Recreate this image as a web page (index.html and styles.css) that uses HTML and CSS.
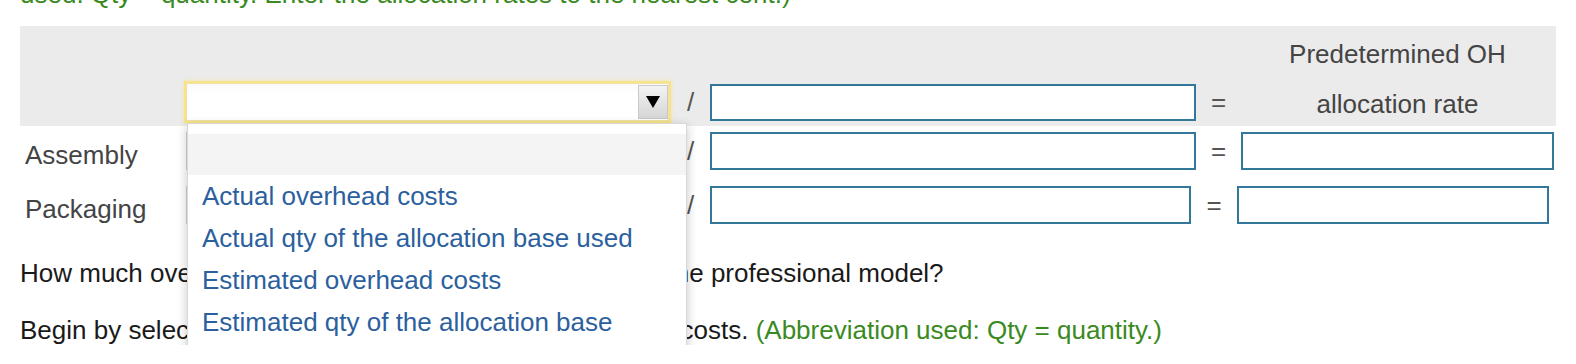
FILE: index.html
```html
<!DOCTYPE html>
<html lang="en">
<head>
<meta charset="utf-8">
<title>Overhead allocation</title>
<link rel="stylesheet" href="styles.css">
</head>
<body>
<div class="page">
  <p class="note green">used. Qty = quantity. Enter the allocation rates to the nearest cent.)</p>

  <div class="sheet">
    <div class="row hdr">
      <div class="lbl"></div>
      <div class="sel-cell">
        <div class="select focused">
          <span class="sel-val"></span>
          <span class="sel-btn"><svg width="14" height="12" viewBox="0 0 14 12"><path d="M0 0H14L7 12Z" fill="#000"/></svg></span>
          <ul class="menu">
            <li class="opt blank"></li>
            <li class="opt">Actual overhead costs</li>
            <li class="opt">Actual qty of the allocation base used</li>
            <li class="opt">Estimated overhead costs</li>
            <li class="opt">Estimated qty of the allocation base</li>
          </ul>
        </div>
      </div>
      <div class="op">/</div>
      <div class="inp-cell"><input class="field" type="text" aria-label="Allocation base"></div>
      <div class="op">=</div>
      <div class="rate-head">Predetermined OH<br>allocation rate</div>
    </div>

    <div class="row">
      <div class="lbl">Assembly</div>
      <div class="sel-cell"><div class="select"><span class="sel-val"></span><span class="sel-btn"></span></div></div>
      <div class="op">/</div>
      <div class="inp-cell"><input class="field" type="text" aria-label="Assembly base"></div>
      <div class="op">=</div>
      <div class="rate-cell"><input class="field" type="text" aria-label="Assembly rate"></div>
    </div>

    <div class="row row-pk">
      <div class="lbl">Packaging</div>
      <div class="sel-cell"><div class="select"><span class="sel-val"></span><span class="sel-btn"></span></div></div>
      <div class="op">/</div>
      <div class="inp-cell"><input class="field" type="text" aria-label="Packaging base"></div>
      <div class="op">=</div>
      <div class="rate-cell"><input class="field" type="text" aria-label="Packaging rate"></div>
    </div>
  </div>

  <p class="text q1">How much overhead should be allocated to each unit of the professional model?</p>
  <p class="text q2">Begin by selecting the formula used to allocate overhead costs. <span class="green">(Abbreviation used: Qty = quantity.)</span></p>
</div>
</body>
</html>
```

FILE: styles.css
```css
* { box-sizing: border-box; }

html, body {
  margin: 0;
  padding: 0;
  background: #ffffff;
  overflow: hidden;
}

body {
  font-family: "Liberation Sans", Arial, Helvetica, sans-serif;
  font-size: 26px;
  color: #1a1a1a;
}

.page {
  padding: 0 20px 0 20px;
}

.green { color: #3a8a22; }

.note {
  margin: -21px 0 0 0;
  line-height: 30px;
}

.sheet {
  margin-top: 17px;
}

.row {
  display: grid;
  grid-template-columns: 164px 487px 39px 486px 45px 315px;
  height: 54px;
  align-items: start;
  padding-top: 6px;
}

.row-pk {
  grid-template-columns: 164px 487px 39px 481px 46px 319px;
}

.hdr {
  background: #ebebeb;
  height: 100px;
  align-items: end;
  padding-top: 0;
  padding-bottom: 5px;
}

.lbl {
  color: #444;
  padding: 4px 0 0 5px;
  line-height: 38px;
}

.sel-cell {
  padding-left: 2px;
}

.select {
  position: relative;
  display: flex;
  width: 483px;
  height: 38px;
  border: 1px solid #d4d4d4;
  background: linear-gradient(#fafafa, #ffffff 30%);
}

.select.focused {
  border-color: #efe3a8;
  box-shadow: 0 0 0 2px #f8e488, 0 0 4px 2px #f6e39a;
  z-index: 5;
}

.sel-val { flex: 1; }

.sel-btn {
  width: 30px;
  margin: 1px 0 1px 0;
  border: 1px solid #c9c9c9;
  background: linear-gradient(#f3f3f3, #d6d6d6);
  display: flex;
  align-items: center;
  justify-content: center;
}

.sel-btn svg { display: block; }

.menu {
  position: absolute;
  left: 0;
  top: 39px;
  width: 500px;
  margin: 0;
  padding: 10px 0 8px 0;
  list-style: none;
  background: #ffffff;
  border: 1px solid #d8d8d8;
  box-shadow: 0 3px 10px rgba(0, 0, 0, 0.22);
  z-index: 10;
}

.opt {
  height: 42px;
  line-height: 42px;
  padding: 0 14px;
  color: #2c5f9e;
  white-space: nowrap;
}

.opt.blank {
  height: 41px;
  background: #f4f4f4;
}

.op {
  text-align: center;
  color: #555;
  line-height: 37px;
}

.row .op { line-height: 38px; }

.field {
  display: block;
  width: 100%;
  height: 38px;
  margin: 0;
  border: 2px solid #31789a;
  border-radius: 0;
  background: #fff;
  font: inherit;
  padding: 0 6px;
  outline: none;
}

.hdr .field { height: 37px; }

.rate-cell {
  padding-right: 2px;
}

.row-pk .rate-cell .field { width: 312px; }

.rate-head {
  align-self: start;
  height: 95px;
  text-align: center;
  color: #444;
  line-height: 50px;
  padding: 3px 2px 0 0;
  white-space: nowrap;
}

.text {
  margin: 0;
  line-height: 30px;
  white-space: nowrap;
}

.q1 { margin-top: 24px; }
.q2 { margin-top: 27px; }
```
